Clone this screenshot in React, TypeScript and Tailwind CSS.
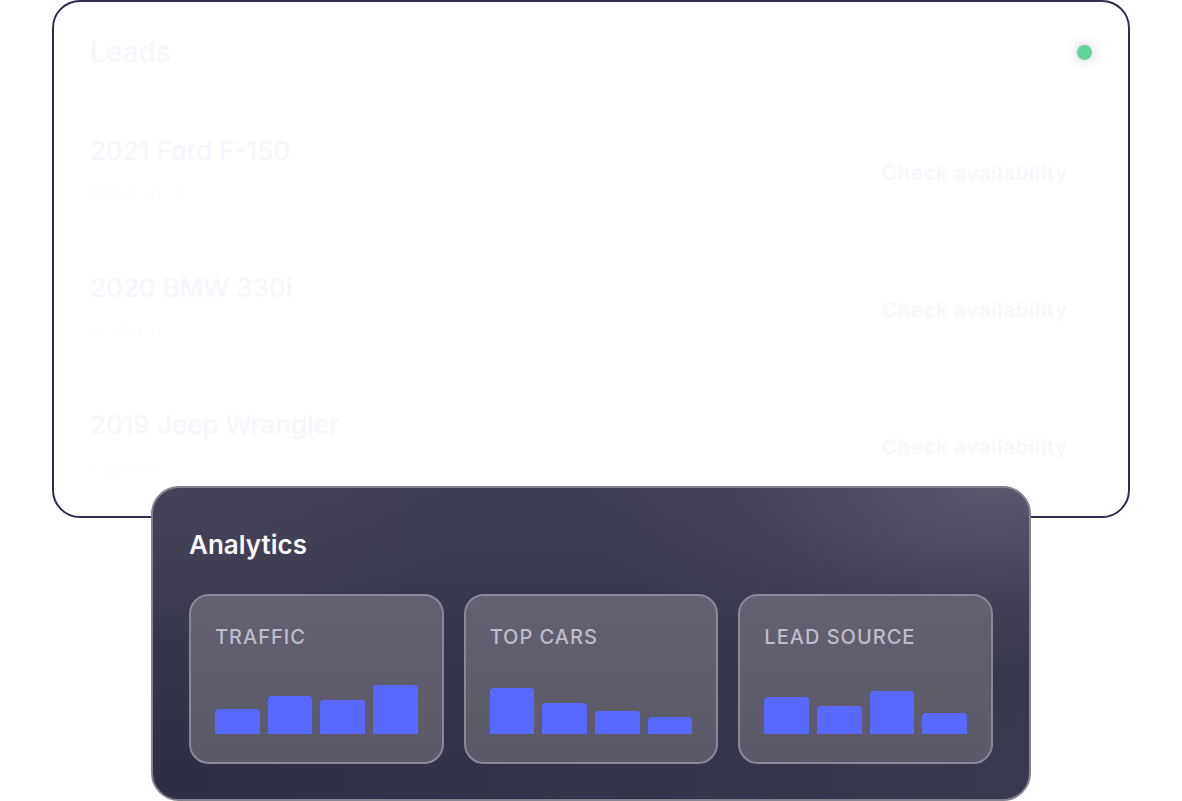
const leads = [
  { car: '2021 Ford F-150', name: 'Marcus T.' },
  { car: '2020 BMW 330i', name: 'Dana R.' },
  { car: '2019 Jeep Wrangler', name: 'Luis M.' },
];

const charts = [
  { title: 'Traffic', bars: [25, 38, 34, 49] },
  { title: 'Top Cars', bars: [46, 31, 23, 17] },
  { title: 'Lead Source', bars: [37, 28, 43, 21] },
];

function LeadsCard() {
  return (
    <section className="rounded-[28px] border-2 border-[#342a4e] px-9 pt-8">
      <div className="flex items-center justify-between">
        <h2 className="text-[28px] font-medium leading-9 text-[#f7f6fd]">Leads</h2>
        <span className="size-[15px] rounded-full bg-[#5dd39a] shadow-[0_0_12px_rgba(60,60,100,0.3)]" />
      </div>
      <ul className="mt-[39px] -mb-1">
        {leads.map((lead) => (
          <li key={lead.car} className="flex h-[137px] items-start justify-between pt-6">
            <div>
              <h3 className="text-[26px] font-medium leading-9 text-[#f7f6fd]">{lead.car}</h3>
              <p className="mt-2 text-[22px] leading-8 text-[#fefefe]">{lead.name}</p>
            </div>
            <button className="mt-3 px-6 py-3 text-xl font-medium leading-8 tracking-wider text-[#f7f6fd]">
              Check availability
            </button>
          </li>
        ))}
      </ul>
    </section>
  );
}

function ChartCard({ title, bars }: { title: string; bars: number[] }) {
  return (
    <div className="rounded-[20px] border-2 border-[#8b8998] bg-linear-to-b from-[#636170] to-[#5b5968] px-6 pb-7 pt-6">
      <h3 className="text-xl font-medium uppercase leading-[34px] tracking-wider text-[#bebdc9]">{title}</h3>
      <div className="mt-6 flex h-14 items-end gap-2">
        {bars.map((height, i) => (
          <div key={i} className="flex-1 rounded-t bg-[#5869ff]" style={{ height }} />
        ))}
      </div>
    </div>
  );
}

export default function App() {
  return (
    <main className="overflow-hidden bg-white px-[52px] font-['Inter',sans-serif]">
      <LeadsCard />
      <section className="relative mx-[99px] -mt-8 rounded-[28px] border-2 border-[#85838f] bg-[radial-gradient(ellipse_48%_58%_at_96%_0%,#5a596b_0%,#504e65_25%,#48455ab0_60%,#48455a00_100%),radial-gradient(ellipse_30%_50%_at_6%_0%,#454257_0%,#45425700_100%),linear-gradient(to_bottom,#3f3f54_0%,#38384c_38%,#38384c00_90%),linear-gradient(to_right,#2e2e44_0%,#3a3a4f_100%)] px-9 pb-[35px] pt-[39px]">
        <h2 className="text-[26px] font-semibold leading-9 text-[#f7f6fd]">Analytics</h2>
        <div className="mt-[31px] grid grid-cols-3 gap-5">
          {charts.map((chart) => (
            <ChartCard key={chart.title} title={chart.title} bars={chart.bars} />
          ))}
        </div>
      </section>
    </main>
  );
}
